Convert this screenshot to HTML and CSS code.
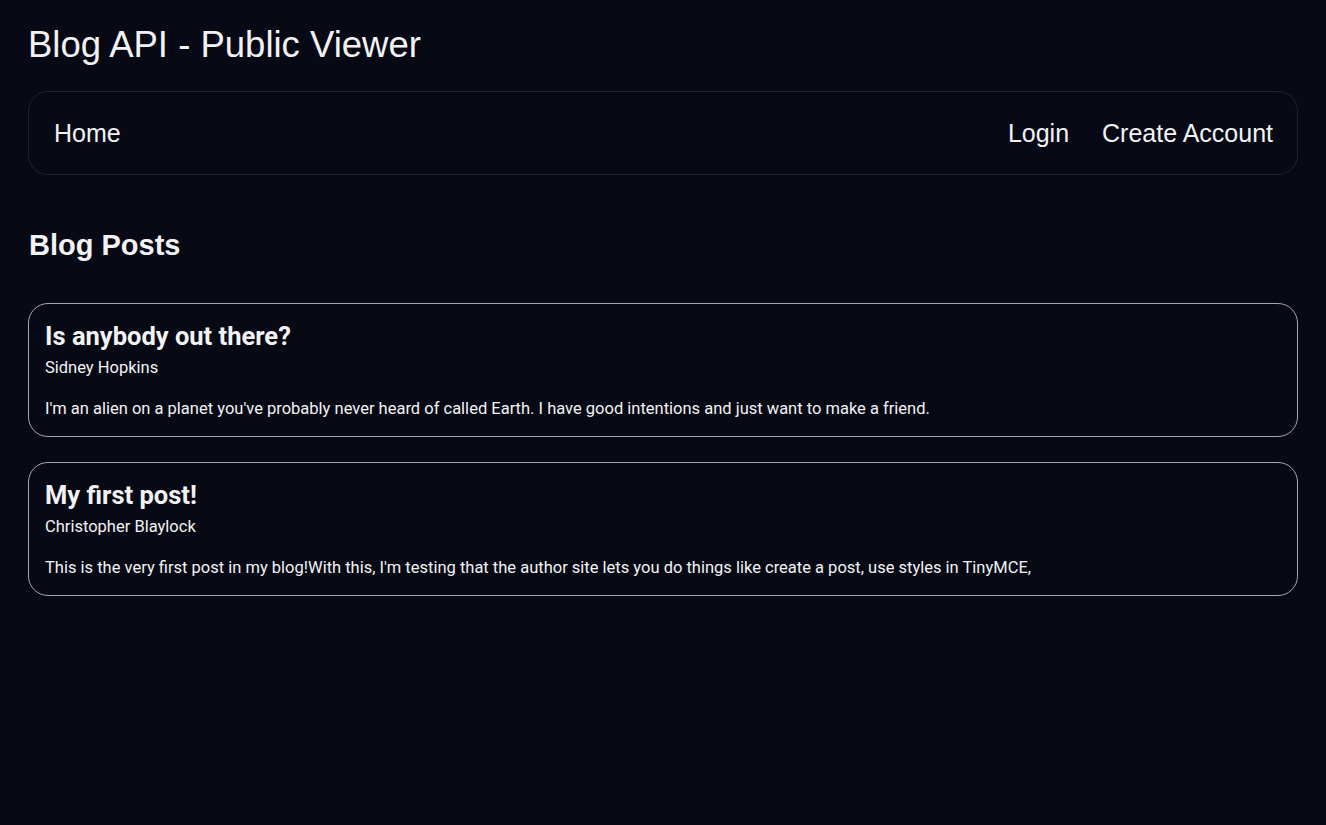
FILE: index.html
```html
<!DOCTYPE html>
<html lang="en">
<head>
<meta charset="utf-8">
<title>Blog API - Public Viewer</title>
<link rel="stylesheet" href="styles.css">
</head>
<body>
<div class="page">
  <h1 class="site-title">Blog API - Public Viewer</h1>
  <nav class="nav">
    <a class="nav-link" href="#">Home</a>
    <div class="nav-right">
      <a class="nav-link" href="#">Login</a>
      <a class="nav-link" href="#">Create Account</a>
    </div>
  </nav>
  <h2 class="section-title">Blog Posts</h2>
  <div class="posts">
    <article class="post">
      <h3 class="post-title">Is anybody out there?</h3>
      <div class="post-author">Sidney Hopkins</div>
      <p class="post-body">I'm an alien on a planet you've probably never heard of called Earth. I have good intentions and just want to make a friend.</p>
    </article>
    <article class="post">
      <h3 class="post-title">My first post!</h3>
      <div class="post-author">Christopher Blaylock</div>
      <p class="post-body">This is the very first post in my blog!With this, I'm testing that the author site lets you do things like create a post, use styles in TinyMCE,</p>
    </article>
  </div>
</div>
</body>
</html>
```
FILE: styles.css
```css
html, body {
  margin: 0;
  padding: 0;
  background: #070a14;
  color: #f2f2f4;
  font-family: Roboto, "Noto Sans", sans-serif;
}
.page {
  padding: 20px 28px 40px 28px;
}
.site-title {
  margin: 0;
  font-family: "Liberation Sans", Arial, sans-serif;
  font-size: 36.5px;
  font-weight: 400;
  line-height: 50px;
}
.nav {
  margin-top: 21px;
  height: 82px;
  border: 1px solid #1e222c;
  border-radius: 20px;
  display: flex;
  align-items: center;
  justify-content: space-between;
  padding: 0 24px 0 25px;
}
.nav-right {
  display: flex;
  gap: 33px;
}
.nav-link {
  color: #f2f2f4;
  text-decoration: none;
  font-family: "Liberation Sans", Arial, sans-serif;
  font-size: 25px;
}
.section-title {
  margin: 50px 0 0 0;
  padding-left: 1px;
  font-family: "Liberation Sans", Arial, sans-serif;
  font-size: 29px;
  font-weight: 700;
  line-height: 40px;
}
.posts {
  margin-top: 38px;
  display: flex;
  flex-direction: column;
  gap: 25px;
}
.post {
  border: 1px solid #a4a7b0;
  border-radius: 20px;
  padding: 17px 16px 17px 16px;
}
.post-title {
  margin: 0;
  font-size: 25.5px;
  font-weight: 700;
  line-height: 30px;
}
.post-author {
  margin-top: 7px;
  font-size: 16.5px;
  line-height: 20px;
}
.post-body {
  margin: 21px 0 0 0;
  font-size: 16.5px;
  line-height: 20px;
}
```
